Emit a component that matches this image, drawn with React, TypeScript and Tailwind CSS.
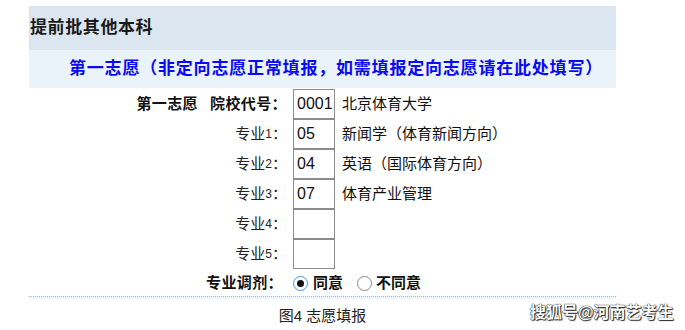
const rows = [
  { label: "1", code: "05", name: "新闻学（体育新闻方向）" },
  { label: "2", code: "04", name: "英语（国际体育方向）" },
  { label: "3", code: "07", name: "体育产业管理" },
  { label: "4", code: "", name: "" },
  { label: "5", code: "", name: "" },
];

const Radio = ({ checked }: { checked: boolean }) => (
  <span
    className={
      checked
        ? "flex h-[15px] w-[15px] items-center justify-center rounded-full border border-[#3b9be8] bg-white"
        : "flex h-[15px] w-[15px] items-center justify-center rounded-full border border-[#8a8a8a] bg-white"
    }
  >
    {checked && <span className="h-[7px] w-[7px] rounded-full bg-[#111]" />}
  </span>
);

export default function App() {
  return (
    <div className="relative h-[330px] w-[685px] overflow-hidden bg-white font-['Liberation_Sans','Noto_Sans_CJK_SC',sans-serif] text-[#111]">
      <div className="ml-[29px] mt-[6px] w-[587px]">
        <div className="flex h-[44px] items-center bg-[#dce6f0] pl-[1px] text-[17px] font-bold tracking-[0.6px] text-[#1a1a1a]">
          提前批其他本科
        </div>
        <div className="flex h-[38px] items-center bg-[#eaf2fa] pl-[40px] text-[17px] font-bold tracking-[0.8px] text-[#0a0af0]">
          第一志愿（非定向志愿正常填报，如需填报定向志愿请在此处填写）
        </div>

        <div className="grid grid-cols-[264px_42px_1fr] pt-[1px] text-[15px]">
          <div className="flex h-[30px] items-center justify-end pr-[6px] font-bold tracking-[0.4px]">
            <span>第一志愿</span>
            <span className="ml-[12px]">院校代号：</span>
          </div>
          <div className="flex h-[30px] items-center border border-[#8c8c8c] pl-[3px] font-['Liberation_Sans',sans-serif] text-[16px]">
            0001
          </div>
          <div className="flex h-[30px] items-center pl-[7px]">北京体育大学</div>

          {rows.map((r) => (
            <div key={r.label} className="contents">
              <div className="flex h-[30px] items-center justify-end pr-[6px] text-[#222]">
                专业<span className="text-[12px]">{r.label}</span>：
              </div>
              <div className="flex h-[30px] items-center border border-[#8c8c8c] pl-[3px] font-['Liberation_Sans',sans-serif] text-[16px]">
                {r.code}
              </div>
              <div className="flex h-[30px] items-center pl-[7px]">{r.name}</div>
            </div>
          ))}

          <div className="flex h-[27px] items-center justify-end pr-[10px] pt-[2px] font-bold tracking-[0.4px]">
            专业调剂：
          </div>
          <div className="col-span-2 flex h-[27px] items-center pt-[2px] font-bold">
            <Radio checked />
            <span className="ml-[5px]">同意</span>
            <span className="ml-[14px]">
              <Radio checked={false} />
            </span>
            <span className="ml-[4px]">不同意</span>
          </div>
        </div>

        <div className="h-[3px] border-t border-dotted border-[#b8b8b8] bg-[#eef4fa]" />
        <div className="flex h-[30px] items-center justify-center pt-[4px] text-[15px] text-[#222]">
          图4 志愿填报
        </div>
      </div>

      <div className="absolute left-[530px] top-[301px] text-[16px] font-bold text-white [text-shadow:0_0_1px_#000,0_0_1px_#000,1px_1px_1px_#333]">
        搜狐号@河南艺考生
      </div>
    </div>
  );
}
